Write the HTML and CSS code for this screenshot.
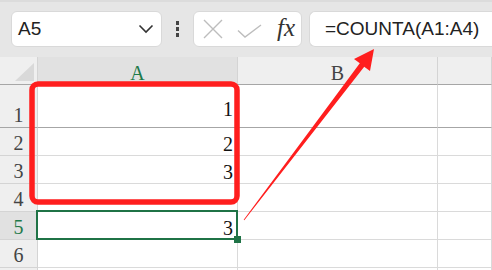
FILE: index.html
```html
<!DOCTYPE html>
<html lang="en">
<head>
    <meta charset="UTF-8">
    <title>COUNTA</title>
    <link rel="stylesheet" href="styles.css">
</head>
<body>
    <div class="app">
        <div class="toolbar">
            <div class="name-box">
                <span>A5</span>
                <svg class="chevron" width="16" height="10" viewBox="0 0 16 10">
                    <path d="M1.5 1.5 L8 8 L14.5 1.5" fill="none" stroke="#333" stroke-width="1.6"/>
                </svg>
            </div>
            <div class="grip"><i></i><i></i><i></i></div>
            <div class="func-buttons">
                <svg width="20" height="20" viewBox="0 0 20 20">
                    <path d="M1 1 L19 19 M19 1 L1 19" stroke="#bdbdbd" stroke-width="1.4"/>
                </svg>
                <svg width="25" height="14" viewBox="0 0 25 14">
                    <path d="M1 6.5 L8 13 L24 1" fill="none" stroke="#bdbdbd" stroke-width="1.4"/>
                </svg>
                <span class="fx">fx</span>
            </div>
            <div class="formula">=COUNTA(A1:A4)</div>
        </div>

        <div class="sheet">
            <div class="hd corner"><span class="tri"></span></div>
            <div class="hd col sel">A</div>
            <div class="hd col">B</div>
            <div class="hd col"></div>

            <div class="hd row first">1</div>
            <div class="cell first">1</div>
            <div class="cell first"></div>
            <div class="cell first"></div>

            <div class="hd row">2</div>
            <div class="cell">2</div>
            <div class="cell"></div>
            <div class="cell"></div>

            <div class="hd row">3</div>
            <div class="cell">3</div>
            <div class="cell"></div>
            <div class="cell"></div>

            <div class="hd row">4</div>
            <div class="cell"></div>
            <div class="cell"></div>
            <div class="cell"></div>

            <div class="hd row sel">5</div>
            <div class="cell active">3</div>
            <div class="cell"></div>
            <div class="cell"></div>

            <div class="hd row">6</div>
            <div class="cell"></div>
            <div class="cell"></div>
            <div class="cell"></div>

            <div class="hd row"></div>
            <div class="cell"></div>
            <div class="cell"></div>
            <div class="cell"></div>
        </div>

        <!-- annotation: red box + arrow to the formula -->
        <svg class="annot" width="492" height="270" viewBox="0 0 492 270">
            <rect x="32" y="84" width="205" height="118" rx="6" fill="none" stroke="#ff1e1e" stroke-width="5.5"/>
            <polygon fill="#ff1e1e" points="243.7,219.8 359.8,63.2 354,59 374,49 370,71 364.2,66.8 244.3,220.2"/>
        </svg>
    </div>
</body>
</html>
```

FILE: styles.css
```css
body {
    margin: 0;
    background-color: #ffffff;
}
.app {
    position: relative;
    width: 492px;
    height: 270px;
    overflow: hidden;
}
.toolbar {
    display: flex;
    align-items: flex-start;
    height: 57px;
    box-sizing: border-box;
    padding: 11px 0 0 11px;
    background-color: #e6e6e6;
    border-top: 2px solid #dcdcdc;
    font-family: "Liberation Sans", Arial, sans-serif;
}
.name-box,
.func-buttons,
.formula {
    height: 36px;
    box-sizing: border-box;
    background-color: #fff;
    border: 1px solid #d9d9d9;
    border-radius: 6px;
    display: flex;
    align-items: center;
}
.toolbar > * {
    margin-top: -2px;
}
.name-box {
    width: 151px;
    padding: 0 7px 0 6px;
    justify-content: space-between;
    font-size: 19px;
    color: #222;
}
.grip {
    width: 31px;
    height: 36px;
    display: flex;
    flex-direction: column;
    align-items: center;
    justify-content: center;
    gap: 2.5px;
}
.grip i {
    width: 3.5px;
    height: 3.5px;
    background-color: #444;
}
.func-buttons {
    width: 109px;
    padding: 0 6px 0 9px;
    justify-content: space-between;
}
.func-buttons svg:nth-child(2) {
    margin-top: 4px;
}
.fx {
    font-family: "Liberation Serif", "Times New Roman", serif;
    font-style: italic;
    font-size: 25px;
    color: #333;
    margin-top: -3px;
}
.formula {
    flex: 1;
    margin-left: 7px;
    border-right: none;
    border-radius: 6px 0 0 6px;
    padding-left: 15px;
    font-size: 19px;
    color: #222;
}
.sheet {
    display: grid;
    grid-template-columns: 38px 200px 200px 1fr;
    grid-template-rows: 28px 43px repeat(6, 28px);
    font-family: "Liberation Serif", "Times New Roman", serif;
    font-size: 20px;
    line-height: 20px;
}
.sheet > div {
    box-sizing: border-box;
    border-right: 1px solid #dadada;
    border-bottom: 1px solid #dadada;
    display: flex;
    align-items: flex-end;
}
.hd {
    background-color: #efefef;
    color: #444;
    border-color: #d4d4d4 !important;
}
.hd.col {
    justify-content: center;
    padding-bottom: 1px;
    border-bottom-color: #a6a6a6 !important;
}
.corner {
    border-bottom-color: #a6a6a6 !important;
    position: relative;
}
.tri {
    position: absolute;
    left: 15px;
    top: 6px;
    width: 19px;
    height: 18px;
    background-color: #d9d9d9;
    clip-path: polygon(100% 0, 100% 100%, 0 100%);
}
.hd.row {
    justify-content: center;
    padding-bottom: 2px;
}
.hd.sel {
    background-color: #e1e1e1;
    color: #1f7a4a;
}
.first {
    border-bottom-color: #a6a6a6 !important;
}
.cell {
    justify-content: flex-end;
    padding: 0 4px 1px 0;
    color: #111;
}
.cell.first {
    padding-bottom: 8px;
}
.cell.active {
    position: relative;
}
.cell.active::after {
    content: "";
    position: absolute;
    top: -2px;
    left: -2px;
    right: -1px;
    bottom: -1px;
    border: 2px solid #1f7346;
}
.cell.active::before {
    content: "";
    position: absolute;
    right: -4px;
    bottom: -4px;
    width: 7px;
    height: 7px;
    background-color: #1f7346;
    z-index: 1;
}
.annot {
    position: absolute;
    left: 0;
    top: 0;
    pointer-events: none;
}
```
